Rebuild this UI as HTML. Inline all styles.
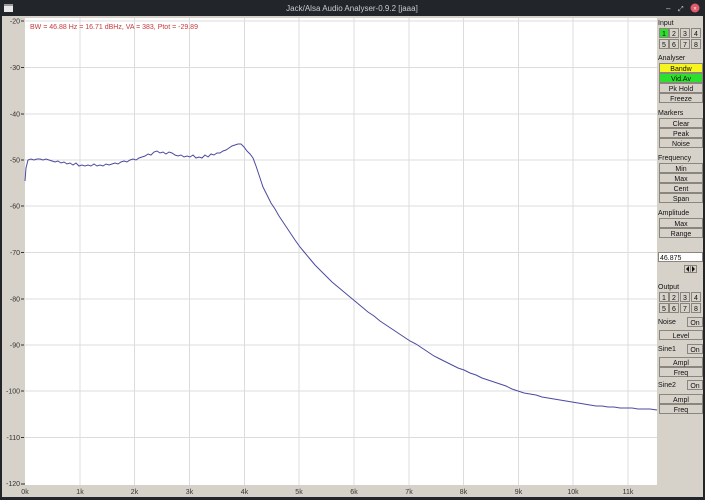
<!DOCTYPE html>
<html><head><style>
html,body{margin:0;padding:0;width:705px;height:500px;overflow:hidden;background:#d6d2ca;font-family:"Liberation Sans","DejaVu Sans",sans-serif}
svg text{font-family:"Liberation Sans","DejaVu Sans",sans-serif}
</style></head><body>
<svg width="705" height="500" xmlns="http://www.w3.org/2000/svg" font-size="7">
<rect x="0" y="0" width="705" height="500" fill="#d6d2ca"/>
<rect x="0" y="0" width="705" height="16" fill="#22262b"/>
<rect x="4" y="4" width="9" height="8" fill="#e8e8e8"/><rect x="4" y="4" width="9" height="2" fill="#999"/>
<text x="352" y="11" fill="#c9ccd0" font-size="8" text-anchor="middle">Jack/Alsa Audio Analyser-0.9.2  [jaaa]</text>
<text x="666" y="11" fill="#ccc" font-size="8">–</text>
<text x="678" y="11" fill="#ccc" font-size="7">⤢</text>
<circle cx="695" cy="8" r="4.5" fill="#e05a6a"/><text x="695" y="10.5" fill="#fff" font-size="6" text-anchor="middle">×</text>
<rect x="0" y="16" width="2" height="484" fill="#22262b"/>
<rect x="0" y="497" width="705" height="3" fill="#22262b"/>
<rect x="703" y="16" width="2" height="484" fill="#22262b"/>
<rect x="25" y="18" width="632" height="467" fill="#fff"/>
<g stroke="#dcdcdc" stroke-width="1">
<line x1="25" y1="21" x2="657" y2="21"/><line x1="25" y1="67.5" x2="657" y2="67.5"/><line x1="25" y1="114" x2="657" y2="114"/><line x1="25" y1="160" x2="657" y2="160"/><line x1="25" y1="206" x2="657" y2="206"/><line x1="25" y1="252.5" x2="657" y2="252.5"/><line x1="25" y1="299" x2="657" y2="299"/><line x1="25" y1="345" x2="657" y2="345"/><line x1="25" y1="391" x2="657" y2="391"/><line x1="25" y1="437.5" x2="657" y2="437.5"/>
<line x1="80" y1="18" x2="80" y2="485"/><line x1="134.5" y1="18" x2="134.5" y2="485"/><line x1="189.5" y1="18" x2="189.5" y2="485"/><line x1="244.5" y1="18" x2="244.5" y2="485"/><line x1="299" y1="18" x2="299" y2="485"/><line x1="354" y1="18" x2="354" y2="485"/><line x1="409" y1="18" x2="409" y2="485"/><line x1="463.5" y1="18" x2="463.5" y2="485"/><line x1="518.5" y1="18" x2="518.5" y2="485"/><line x1="573" y1="18" x2="573" y2="485"/><line x1="628" y1="18" x2="628" y2="485"/>
</g>
<text x="30" y="29" fill="#c8383c" font-size="7">BW = 46.88 Hz = 16.71 dBHz, VA = 383, Ptot = -29.89</text>
<g fill="#333" font-size="7" text-anchor="end">
<text x="20" y="23.5">-20</text><text x="20" y="70">-30</text><text x="20" y="116.5">-40</text><text x="20" y="162.5">-50</text><text x="20" y="208.5">-60</text><text x="20" y="255">-70</text><text x="20" y="301.5">-80</text><text x="20" y="347.5">-90</text><text x="20" y="393.5">-100</text><text x="20" y="440">-110</text><text x="20" y="486">-120</text>
</g>
<g stroke="#333"><line x1="21" y1="21" x2="24" y2="21"/><line x1="21" y1="67.5" x2="24" y2="67.5"/><line x1="21" y1="114" x2="24" y2="114"/><line x1="21" y1="160" x2="24" y2="160"/><line x1="21" y1="206" x2="24" y2="206"/><line x1="21" y1="252.5" x2="24" y2="252.5"/><line x1="21" y1="299" x2="24" y2="299"/><line x1="21" y1="345" x2="24" y2="345"/><line x1="21" y1="391" x2="24" y2="391"/><line x1="21" y1="437.5" x2="24" y2="437.5"/><line x1="21" y1="484" x2="25" y2="484"/></g>
<g fill="#333" font-size="7" text-anchor="middle">
<text x="25" y="494">0k</text><text x="80" y="494">1k</text><text x="134.5" y="494">2k</text><text x="189.5" y="494">3k</text><text x="244.5" y="494">4k</text><text x="299" y="494">5k</text><text x="354" y="494">6k</text><text x="409" y="494">7k</text><text x="463.5" y="494">8k</text><text x="518.5" y="494">9k</text><text x="573" y="494">10k</text><text x="628" y="494">11k</text>
</g>
<polyline fill="none" stroke="#4a4aa0" stroke-width="1" points="25,181 26,168 28,160 31,159 34,160 37,159 40,159 43,160 46,159 49,160 52,161 55,162 58,161 61,163 64,162 67,164 70,163 73,165 76,163 79,166 82,165 85,166 88,165 91,166 94,164 97,166 100,165 103,166 106,164 109,165 112,164 115,163 118,164 121,162 124,161 127,162 130,160 133,159 136,160 139,158 142,157 145,156 148,154 151,155 154,152 157,151 160,153 163,152 166,154 169,152 172,153 175,155 178,156 181,155 184,157 187,156 190,157 193,155 196,158 199,157 202,158 205,155 208,157 211,154 214,155 217,153 220,153 223,151 226,150 229,148 232,146 235,145 238,144 241,144 244,147 247,151 250,154 253,158 256,166 260,178 263,187 267,195 271,203 275,209 279,216 283,222 287,228 291,234 295,240 300,247 305,253 310,259 315,265 320,270 326,276 332,282 338,287 344,292 350,297 356,302 362,307 368,312 374,316 380,321 386,325 392,329 398,333 404,337 410,341 416,344 422,348 428,352 434,356 440,359 446,362 452,365 458,368 464,370 470,373 476,375 482,378 488,380 494,382 500,384 506,386 512,389 518,391 524,393 530,394 536,395 542,397 548,398 554,399 560,400 566,401 572,402 578,403 584,404 590,405 596,406 602,406 608,407 614,407 620,408 626,408 632,408 638,409 644,409 650,409 657,410"/>
<g font-size="7" fill="#111">
<text x="658" y="25">Input</text>
<text x="658" y="60">Analyser</text>
<text x="658" y="115">Markers</text>
<text x="658" y="160">Frequency</text>
<text x="658" y="215">Amplitude</text>
<text x="658" y="289">Output</text>
<text x="658" y="324">Noise</text>
<text x="658" y="351">Sine1</text>
<text x="658" y="387">Sine2</text>
</g>
<g stroke="#8a867e" stroke-width="1" font-size="7" text-anchor="middle">
<rect x="659.5" y="28.5" width="9" height="9" fill="#2ee02e"/><rect x="669.5" y="28.5" width="9" height="9" fill="#d6d2ca"/><rect x="680.5" y="28.5" width="9" height="9" fill="#d6d2ca"/><rect x="691.5" y="28.5" width="9" height="9" fill="#d6d2ca"/>
<rect x="659.5" y="39.5" width="9" height="9" fill="#d6d2ca"/><rect x="669.5" y="39.5" width="9" height="9" fill="#d6d2ca"/><rect x="680.5" y="39.5" width="9" height="9" fill="#d6d2ca"/><rect x="691.5" y="39.5" width="9" height="9" fill="#d6d2ca"/>
<rect x="659.5" y="63.5" width="43" height="9" fill="#f6f61e"/>
<rect x="659.5" y="73.5" width="43" height="9" fill="#2ee02e"/>
<rect x="659.5" y="83.5" width="43" height="9" fill="#d6d2ca"/>
<rect x="659.5" y="93.5" width="43" height="9" fill="#d6d2ca"/>
<rect x="659.5" y="118.5" width="43" height="9" fill="#d6d2ca"/>
<rect x="659.5" y="128.5" width="43" height="9" fill="#d6d2ca"/>
<rect x="659.5" y="138.5" width="43" height="9" fill="#d6d2ca"/>
<rect x="659.5" y="163.5" width="43" height="9" fill="#d6d2ca"/>
<rect x="659.5" y="173.5" width="43" height="9" fill="#d6d2ca"/>
<rect x="659.5" y="183.5" width="43" height="9" fill="#d6d2ca"/>
<rect x="659.5" y="193.5" width="43" height="9" fill="#d6d2ca"/>
<rect x="659.5" y="218.5" width="43" height="9" fill="#d6d2ca"/>
<rect x="659.5" y="228.5" width="43" height="9" fill="#d6d2ca"/>
<rect x="658.5" y="252.5" width="44" height="9" fill="#fff"/>
<rect x="684.5" y="265.5" width="6" height="7" fill="#d6d2ca"/><rect x="690.5" y="265.5" width="6" height="7" fill="#d6d2ca"/>
<rect x="659.5" y="292.5" width="9" height="9" fill="#d6d2ca"/><rect x="669.5" y="292.5" width="9" height="9" fill="#d6d2ca"/><rect x="680.5" y="292.5" width="9" height="9" fill="#d6d2ca"/><rect x="691.5" y="292.5" width="9" height="9" fill="#d6d2ca"/>
<rect x="659.5" y="303.5" width="9" height="9" fill="#d6d2ca"/><rect x="669.5" y="303.5" width="9" height="9" fill="#d6d2ca"/><rect x="680.5" y="303.5" width="9" height="9" fill="#d6d2ca"/><rect x="691.5" y="303.5" width="9" height="9" fill="#d6d2ca"/>
<rect x="687.5" y="317.5" width="15" height="9" fill="#d6d2ca"/>
<rect x="659.5" y="330.5" width="43" height="9" fill="#d6d2ca"/>
<rect x="687.5" y="344.5" width="15" height="9" fill="#d6d2ca"/>
<rect x="659.5" y="357.5" width="43" height="9" fill="#d6d2ca"/>
<rect x="659.5" y="367.5" width="43" height="9" fill="#d6d2ca"/>
<rect x="687.5" y="380.5" width="15" height="9" fill="#d6d2ca"/>
<rect x="659.5" y="394.5" width="43" height="9" fill="#d6d2ca"/>
<rect x="659.5" y="404.5" width="43" height="9" fill="#d6d2ca"/>
</g>
<g font-size="7" fill="#111" text-anchor="middle">
<text x="664" y="36">1</text><text x="674" y="36">2</text><text x="685" y="36">3</text><text x="696" y="36">4</text>
<text x="664" y="47">5</text><text x="674" y="47">6</text><text x="685" y="47">7</text><text x="696" y="47">8</text>
<text x="681" y="71">Bandw</text><text x="681" y="81">Vid.Av</text><text x="681" y="91">Pk Hold</text><text x="681" y="101">Freeze</text>
<text x="681" y="126">Clear</text><text x="681" y="136">Peak</text><text x="681" y="146">Noise</text>
<text x="681" y="171">Min</text><text x="681" y="181">Max</text><text x="681" y="191">Cent</text><text x="681" y="201">Span</text>
<text x="681" y="226">Max</text><text x="681" y="236">Range</text>
<text x="664" y="300">1</text><text x="674" y="300">2</text><text x="685" y="300">3</text><text x="696" y="300">4</text>
<text x="664" y="311">5</text><text x="674" y="311">6</text><text x="685" y="311">7</text><text x="696" y="311">8</text>
<text x="695" y="325">On</text><text x="681" y="338">Level</text>
<text x="695" y="352">On</text><text x="681" y="365">Ampl</text><text x="681" y="375">Freq</text>
<text x="695" y="388">On</text><text x="681" y="402">Ampl</text><text x="681" y="412">Freq</text>
</g>
<text x="660" y="260" font-size="7" fill="#111">46.875</text>
<path d="M689,266 L686,269 L689,272Z M692,266 L695,269 L692,272Z" fill="#111"/>
</svg>
</body></html>
